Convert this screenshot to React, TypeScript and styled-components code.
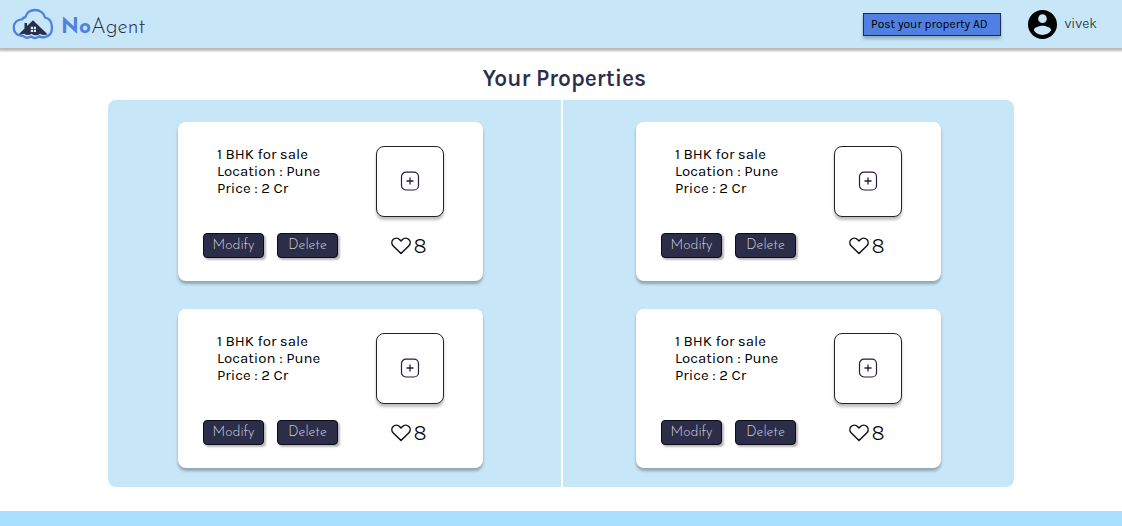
import React from 'react';
import styled, { createGlobalStyle } from 'styled-components';

const GlobalStyle = createGlobalStyle`
  *, *::before, *::after { box-sizing: border-box; }
  body {
    margin: 0;
    background: #fff;
    color: #000;
    font-family: 'Karla', 'Inter', 'Liberation Sans', sans-serif;
  }
  h1, h2, p { margin: 0; }
  svg { display: block; flex: none; }
`;

const displayFont = `'Josefin Sans', 'Lato', 'Liberation Sans', sans-serif`;

const Page = styled.div`
  min-height: 100vh;
  display: flex;
  flex-direction: column;
`;

const Header = styled.header`
  display: flex;
  align-items: center;
  justify-content: space-between;
  height: 48px;
  padding: 0 25px 0 12px;
  background: #c7e6f8;
  box-shadow: 0 2px 2px 1px rgba(60, 50, 60, 0.34);
`;

const Brand = styled.a`
  display: flex;
  align-items: center;
  gap: 7px;
  color: #2b2d49;
  font: 300 21px/24px ${displayFont};
  text-decoration: none;

  b { color: #4f80e2; font-weight: 700; }
  span { padding-top: 8px; }
`;

const Account = styled.div`
  display: flex;
  align-items: center;
`;

const PostButton = styled.button`
  width: 138px;
  height: 23px;
  margin-right: 27px;
  padding: 0 12px 0 6px;
  border: 1px solid #1c2c50;
  background: #4f80e2;
  box-shadow: 0 3px 3px rgba(0, 0, 0, 0.25);
  color: #000;
  font: 400 12px/20px 'Karla', 'Inter', sans-serif;
  white-space: nowrap;
`;

const Profile = styled.a`
  display: flex;
  align-items: center;
  gap: 7px;
  color: #111;
  font-size: 14px;
  line-height: 16px;
  font-weight: 300;
  text-decoration: none;
`;

const Main = styled.main`
  flex: 1;
  padding: 15px 108px 24px;
`;

const Title = styled.h1`
  padding-left: 7px;
  color: #2b2d49;
  font-size: 23px;
  line-height: 32px;
  font-weight: 600;
  text-align: center;
`;

const Panel = styled.div`
  display: grid;
  grid-template-columns: 453fr 451fr;
  gap: 2px;
  margin-top: 5px;
  border-radius: 8px;
  overflow: hidden;
`;

const Column = styled.section<{ $side: 'left' | 'right' }>`
  display: flex;
  flex-direction: column;
  align-items: center;
  gap: 28px;
  padding: ${({ $side }) => ($side === 'left' ? '22px 8px 19px 0' : '22px 0 19px')};
  background: #c7e6f8;
`;

const Card = styled.article`
  display: flex;
  justify-content: space-between;
  width: 100%;
  max-width: 305px;
  min-height: 159px;
  padding: 24px 39px 23px 25px;
  border-radius: 8px;
  background: #fff;
  box-shadow: 0 3px 3px rgba(0, 0, 0, 0.28);
`;

const Info = styled.div`
  display: flex;
  flex-direction: column;
  justify-content: space-between;
`;

const Details = styled.p`
  padding-left: 14px;
  font-size: 15px;
  line-height: 17px;
`;

const Actions = styled.div`
  display: flex;
  gap: 13px;
`;

const ActionButton = styled.button`
  width: 61px;
  height: 25px;
  padding: 0;
  border: 1px solid #0c0c18;
  border-radius: 4px;
  background: #2b2d49;
  box-shadow: 2px 2px 2px rgba(0, 0, 0, 0.28);
  color: #d0d0da;
  font: 300 14px/20px ${displayFont};
`;

const Media = styled.div`
  display: flex;
  flex-direction: column;
  align-items: center;
  gap: 17px;
`;

const AddPhoto = styled.button`
  display: flex;
  flex: none;
  align-items: center;
  justify-content: center;
  width: 68px;
  height: 71px;
  padding: 0 0 2px;
  border: 1px solid #222;
  border-radius: 8px;
  background: #fff;
  box-shadow: 0 3px 3px rgba(0, 0, 0, 0.26);
`;

const Likes = styled.div`
  display: flex;
  align-items: center;
  gap: 2px;
  padding-right: 2px;
  font-size: 22px;
  line-height: 24px;
  font-weight: 300;
`;

const Footer = styled.footer`
  height: 15px;
  background: #a8dfff;
`;

const LogoIcon = () => (
  <svg width="42" height="32" viewBox="0 0 42 32" aria-hidden="true">
    <path
      d="M8 27.500C4 26.500 1.800 23.500 1.800 19.500C1.800 14.500 5.500 11.300 10 11.300C11 9.800 12 9.300 13.500 9C14.500 4.500 18.500 2 23 2C28 2 32 5 33 9.500C37.500 10.500 40 14.500 40 19.500C40 24.500 37.500 28 33.500 28.800C31 29.600 29 29.300 27.500 28.200C24.500 30.600 21.500 30.400 19 28.400C16.500 30.200 13.500 30 11.500 28.200C10.500 28.200 9.300 28 8 27.500Z"
      fill="#c7e6f8"
      stroke="#4f80e2"
      strokeWidth="2.300"
      strokeLinejoin="round"
    />
    <path
      d="M7 26L12.500 20.500V15H15V18L21 12.200L35.500 26.200C33.500 27.300 30.500 27.300 28 25.800C25.500 27.800 22 27.800 19.500 25.800C17.500 27.400 14.500 27.400 12 25.800C10.500 26.700 8.500 26.800 7 26Z"
      fill="#2b2d49"
    />
    <path d="M18.800 18.800h2.200v2.200h-2.200zM21.800 18.800h2.200v2.200h-2.200zM18.800 21.800h2.200v2.200h-2.200zM21.800 21.800h2.200v2.200h-2.200z" fill="#d8eefa" />
  </svg>
);

const AvatarIcon = () => (
  <svg width="29" height="29" viewBox="2 2 20 20" aria-hidden="true">
    <path d="M12 2C6.480 2 2 6.480 2 12s4.480 10 10 10 10-4.480 10-10S17.520 2 12 2zm0 3c1.660 0 3 1.340 3 3s-1.340 3-3 3-3-1.340-3-3 1.340-3 3-3zm0 14.200c-2.500 0-4.710-1.280-6-3.220.03-1.990 4-3.080 6-3.080 1.990 0 5.970 1.090 6 3.080-1.290 1.940-3.500 3.220-6 3.220z" />
  </svg>
);

const PlusIcon = () => (
  <svg width="20" height="20" viewBox="0 0 20 20" fill="none" stroke="#2a1742" aria-hidden="true">
    <rect x="1.500" y="1.200" width="17" height="17.800" rx="4.500" strokeWidth="1.200" />
    <path d="M10 6.500v7M6.500 10h7" strokeWidth="1.300" />
  </svg>
);

const HeartIcon = () => (
  <svg width="20" height="18" viewBox="0 0 20 18" fill="none" stroke="#111" strokeWidth="1.500" strokeLinejoin="round" aria-hidden="true">
    <path d="M10 16.500L2.300 9C.4 7 .4 4.200 2.100 2.500C4 .7 6.800.8 8.500 2.500L10 4L11.500 2.500C13.200.8 16 .7 17.900 2.500C19.600 4.200 19.600 7 17.700 9Z" />
  </svg>
);

type Property = { title: string; location: string; price: string; likes: number };

const flat: Property = { title: '1 BHK for sale', location: 'Pune', price: '2 Cr', likes: 8 };
const columns: { side: 'left' | 'right'; items: Property[] }[] = [
  { side: 'left', items: [flat, flat] },
  { side: 'right', items: [flat, flat] },
];

const PropertyCard = ({ title, location, price, likes }: Property) => (
  <Card>
    <Info>
      <Details>
        {title}
        <br />
        Location : {location}
        <br />
        Price : {price}
      </Details>
      <Actions>
        <ActionButton type="button">Modify</ActionButton>
        <ActionButton type="button">Delete</ActionButton>
      </Actions>
    </Info>
    <Media>
      <AddPhoto type="button" aria-label="Add photo">
        <PlusIcon />
      </AddPhoto>
      <Likes>
        <HeartIcon />
        {likes}
      </Likes>
    </Media>
  </Card>
);

export default function App() {
  return (
    <Page>
      <GlobalStyle />
      <Header>
        <Brand href="#">
          <LogoIcon />
          <span>
            <b>No</b>Agent
          </span>
        </Brand>
        <Account>
          <PostButton type="button">Post your property AD</PostButton>
          <Profile href="#">
            <AvatarIcon />
            vivek
          </Profile>
        </Account>
      </Header>
      <Main>
        <Title>Your Properties</Title>
        <Panel>
          {columns.map(({ side, items }) => (
            <Column key={side} $side={side}>
              {items.map((item, index) => (
                <PropertyCard key={index} {...item} />
              ))}
            </Column>
          ))}
        </Panel>
      </Main>
      <Footer />
    </Page>
  );
}
